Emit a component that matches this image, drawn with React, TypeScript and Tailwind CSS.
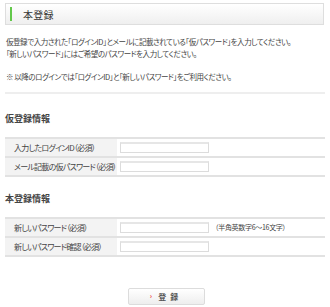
import React from "react";

const jp = "font-['Noto_Sans_CJK_JP',sans-serif]";

function Row({ label, note }: { label: string; note?: string }) {
  return (
    <div className="flex h-[19px] items-stretch border-b-2 border-[#e2e2e2]">
      <div className="flex w-[112px] items-center whitespace-nowrap bg-[#f3f3f3] pl-[9px] text-[8px] tracking-[-0.75px] text-[#444]">
        {label}
      </div>
      <div className="flex items-center pl-[3px]">
        <div className="h-[11px] w-[89px] border border-[#dcdcdc] border-t-2 border-t-[#e6e6e6] bg-white" />
        {note && (
          <span className="ml-[6px] whitespace-nowrap text-[7px] tracking-[-0.3px] text-[#444]">{note}</span>
        )}
      </div>
    </div>
  );
}

export default function App() {
  return (
    <div className={`h-[307px] w-[330px] bg-white px-[5px] pt-[3px] ${jp} [font-feature-settings:'palt']`}>
      <div className="flex h-[22px] w-[319px] items-center border border-[#dedede] bg-gradient-to-b from-white to-[#efefef]">
        <div className="ml-[4px] h-[14px] w-[2px] bg-[#62c84a]" />
        <div className="ml-[11px] text-[10px] text-[#333] tracking-[0.3px]">本登録</div>
      </div>

      <div className="mt-[11px] pl-[1px] text-[7.5px] leading-[12px] tracking-[-0.45px] text-[#444]">
        <p>仮登録で入力された「ログインID」とメールに記載されている「仮パスワード」を入力してください。</p>
        <p>「新しいパスワード」にはご希望のパスワードを入力してください。</p>
        <p className="mt-[11px]">※ 以降のログインでは「ログインID」と「新しいパスワード」をご利用ください。</p>
      </div>

      <div className="mt-[9px] h-[2px] w-[320px] bg-[#eeeeee]" />

      <div className="mt-[19px] text-[9px] font-semibold leading-[12px] text-[#444]">仮登録情報</div>
      <div className="mt-[12px] w-[320px] border-t-2 border-[#e2e2e2]">
        <Row label="入力したログインID（必須）" />
        <Row label="メール記載の仮パスワード（必須）" />
      </div>

      <div className="mt-[16px] text-[9px] font-semibold leading-[12px] text-[#444]">本登録情報</div>
      <div className="mt-[12px] w-[320px] border-t-2 border-[#e2e2e2]">
        <Row label="新しいパスワード（必須）" note="（半角英数字6～16文字）" />
        <Row label="新しいパスワード確認（必須）" />
      </div>

      <div className="mt-[31px] flex justify-center">
        <button className="ml-[2px] flex h-[17px] w-[77px] items-center justify-center rounded-[2px] border border-[#dcdcdc] bg-gradient-to-b from-white to-[#eeeeee] text-[8px] font-bold text-[#555]">
          <span className="mr-[6px] text-[7px] text-[#e33]">›</span>
          <span className="tracking-[4px]">登録</span>
        </button>
      </div>
    </div>
  );
}
